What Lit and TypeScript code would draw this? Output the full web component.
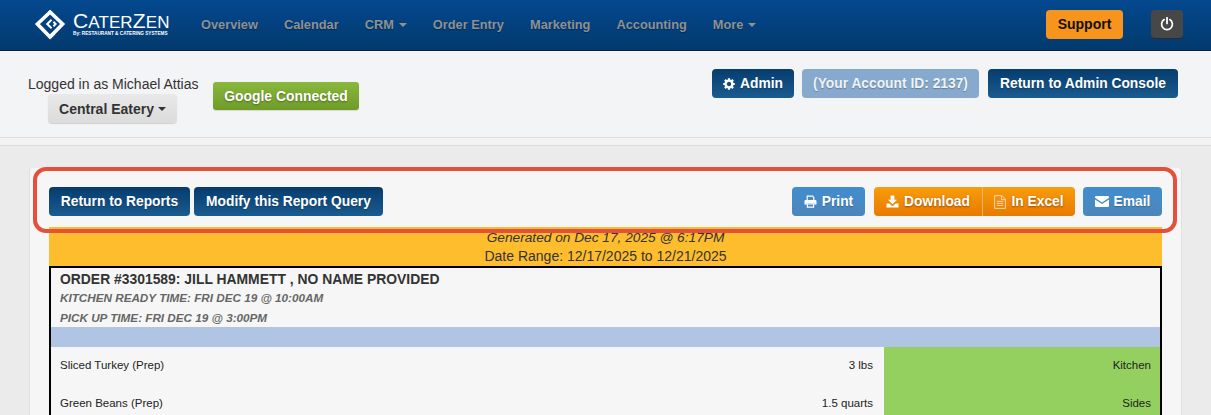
import { LitElement, html, css, svg } from "lit";
import { customElement } from "lit/decorators.js";

const caret = html`<span class="caret"></span>`;

const gear = svg`<svg class="ic" width="12" height="12" viewBox="0 0 12 12"><circle cx="6" cy="6" r="3.4" fill="none" stroke="#fff" stroke-width="2.4"/><g stroke="#fff" stroke-width="2.2"><path d="M6 0.2V2.4M6 9.6V11.8M0.2 6H2.4M9.6 6H11.8M1.9 1.9L3.4 3.4M8.6 8.6L10.1 10.1M10.1 1.9L8.6 3.4M3.4 8.6L1.9 10.1"/></g></svg>`;
const printer = svg`<svg class="ic" width="13" height="13" viewBox="0 0 13 13"><path d="M3.2 5V1.2H8.6L9.8 2.4V5" fill="none" stroke="#fff" stroke-width="1.2"/><path d="M1.6 5H11.4A1.1 1.1 0 0 1 12.5 6.1V9.6H10.2V8H2.8V9.6H.5V6.1A1.1 1.1 0 0 1 1.6 5Z" fill="#fff"/><path d="M3.4 8.8H9.6V12.2H3.4Z" fill="none" stroke="#fff" stroke-width="1.2"/></svg>`;
const download = svg`<svg class="ic" width="13" height="13" viewBox="0 0 13 13"><path d="M4.6 .6H8.4V4.8H11L6.5 9.2L2 4.8H4.6Z" fill="#fff"/><path d="M.5 8.4H3.4L5.2 10.2A1.8 1.8 0 0 0 7.8 10.2L9.6 8.4H12.5V12.4H.5Z" fill="#fff"/></svg>`;
const fileIc = svg`<svg class="ic" width="12" height="14" viewBox="0 0 12 14"><path d="M.6.6H7.8L11.4 4.2V13.4H.6Z M7.4.8V4.6H11.2 M2.8 6.4H9.2M2.8 8.4H9.2M2.8 10.4H9.2" fill="none" stroke="#f6d9ae" stroke-width="1"/></svg>`;
const mail = svg`<svg class="ic" width="14" height="11" viewBox="0 0 14 11"><path d="M1.2 0H12.8A1.2 1.2 0 0 1 14 1.2V1.8L7 6.4L0 1.8V1.2A1.2 1.2 0 0 1 1.2 0Z" fill="#fff"/><path d="M0 3.4L7 8L14 3.4V9.8A1.2 1.2 0 0 1 12.8 11H1.2A1.2 1.2 0 0 1 0 9.8Z" fill="#fff"/></svg>`;
const power = svg`<svg width="14" height="14" viewBox="0 0 14 14"><path d="M4.2 2.6A5.4 5.4 0 1 0 9.8 2.6" fill="none" stroke="#fff" stroke-width="1.7" stroke-linecap="round"/><path d="M7 .8V6.4" stroke="#fff" stroke-width="1.8" stroke-linecap="round"/></svg>`;
const logo = svg`<svg width="32" height="32" viewBox="0 0 32 32"><g fill="none" stroke="#fff" stroke-width="3.6"><path d="M17 3.2L3.4 16L16 29L20 25"/><path d="M15 3L28.6 16L16 29"/></g><path d="M17.6 11.8L13.2 16L17.6 20.2M19.4 13.8L21.6 16L19.4 18.2" fill="none" stroke="#fff" stroke-width="2"/></svg>`;

@customElement("app-root")
export class AppRoot extends LitElement {
  static styles = css`
    :host { display: block; height: 415px; overflow: hidden; background: #ebebeb;
      font-family: "Liberation Sans", Arial, sans-serif; color: #222; }
    * { box-sizing: border-box; }
    .top { height: 51px; background: linear-gradient(#04488f, #023a6d); border-bottom: 1px solid #0d2036;
      display: flex; align-items: center; padding: 0 28px 2px 34px; }
    .brand { display: flex; align-items: center; width: 167px; gap: 7px; }
    .word { color: #fff; line-height: 1; margin-top: 1px; }
    .word b { display: block; font-weight: 400; font-size: 17px; letter-spacing: .1px; line-height: 16px; white-space: nowrap; }
    .word b span { font-size: 21px; }
    .word small { display: block; font-size: 4.7px; font-weight: 700; white-space: nowrap; line-height: 6px; }
    nav { display: flex; gap: 26px; flex: 1; }
    nav a { color: #8f9194; font-size: 12.8px; font-weight: 700; text-shadow: 0 1px 1px rgba(0,0,0,.35); white-space: nowrap; }
    .caret { display: inline-block; width: 0; height: 0; border: 4px solid transparent; border-top-color: currentColor;
      border-bottom: 0; vertical-align: 2px; margin-left: 4px; }
    nav .caret { margin-left: 5px; }
    .support { width: 77px; height: 29px; background: #f7941e; border-radius: 4px; color: #111; font-size: 14px; font-weight: 700;
      display: flex; align-items: center; justify-content: center; margin-right: 28px; }
    .off { width: 32px; height: 29px; border-radius: 4px; background: #474747; border-bottom: 1px solid #2a2a2a;
      display: flex; align-items: center; justify-content: center; }
    .sub { height: 87px; background: #f3f4f5; border-bottom: 1px solid #dcdcdc; display: flex;
      justify-content: space-between; padding: 0 33px 0 28px; }
    .who { display: flex; padding-top: 24px; }
    .login { display: flex; flex-direction: column; align-items: flex-start; width: 171px; }
    .login span { font-size: 14px; line-height: 18px; color: #333; white-space: nowrap; }
    .venue { margin: 1px 0 0 20px; width: 129px; height: 29px; border-radius: 4px; background: linear-gradient(#e9e9e9, #dbdbdb);
      color: #333; font-size: 14px; font-weight: 700; display: flex; align-items: center; justify-content: center;
      box-shadow: 0 1px 1px rgba(0,0,0,.15); }
    .google { margin: 7px 0 0 14px; width: 146px; height: 28px; border-radius: 3px; background: linear-gradient(#8ab73c, #6f9c29);
      color: #fff; font-size: 13.9px; font-weight: 700; display: flex; align-items: center; justify-content: center;
      text-shadow: 0 1px 2px rgba(0,0,0,.35); box-shadow: 0 1px 1px rgba(0,0,0,.12); }
    .acts { display: flex; gap: 8px; padding-top: 18px; }
    .btn { height: 29px; border-radius: 4px; color: #fff; font-size: 13.8px; font-weight: 700; display: flex; align-items: center;
      justify-content: center; gap: 5px; white-space: nowrap; text-shadow: 0 1px 1px rgba(0,0,0,.25); }
    .navy { background: linear-gradient(#063c6d, #1a5b90); }
    .faded { background: #86a9cd; color: #eef3f8; }
    .sky { background: linear-gradient(#428dcf, #4c86ba); }
    .w-admin { width: 82px; }
    .w-account { width: 177px; }
    .w-console { width: 190px; margin-left: 1px; }
    .w-reports { width: 141px; }
    .w-query { width: 189px; }
    .w-print { width: 73px; }
    .w-download { width: 108px; }
    .w-excel { width: 93px; }
    .w-email { width: 79px; }
    .band { height: 8px; background: #f3f3f3; border-bottom: 1px solid #dcdcdc; }
    main { padding: 22px 29px 0; }
    .card { position: relative; background: #f6f6f6; border-radius: 3px 3px 0 0; border-right: 1px solid #e0e0e0; border-left: 1px solid #e0e0e0;
      padding: 19px 19px 0 19px; height: 260px; }
    .tools { display: flex; gap: 4px; height: 29px; }
    .push { flex: 1; }
    .split { display: flex; margin: 0 4px 0 5px; border-radius: 4px; overflow: hidden; }
    .split .btn { border-radius: 0; background: linear-gradient(#f89c0c, #e97a00); text-shadow: 0 1px 2px rgba(90,40,0,.6); }
    .split .btn + .btn { border-left: 1px solid #f3b469; }
    .gen { margin-top: 11px; height: 39px; padding-top: 1px; background: #fdbd2c; text-align: center; font-size: 14px; line-height: 19px; color: #333; }
    .gen i { display: block; font-size: 13.7px; }
    .report { border: 2px solid #000; border-bottom: 0; height: 170px; }
    .ohead { padding: 2px 9px 0; height: 59px; }
    .ohead h3 { margin: 0; font-size: 13.9px; line-height: 18px; color: #333; font-weight: 700; }
    .ohead p { margin: 0; font-size: 11.7px; line-height: 19.5px; color: #666; font-weight: 700; font-style: italic; }
    .bar { height: 20px; background: #b0c4e4; }
    .row { display: grid; grid-template-columns: 1fr 90px 276px; height: 37.5px; font-size: 11.5px; color: #222; line-height: 37.5px; }
    .row div:first-child { padding-left: 9px; }
    .row div:nth-child(2) { text-align: right; margin-right: 11px; }
    .row div:nth-child(3) { text-align: right; background: #94d060; padding-right: 9px; }
    .mark { position: absolute; left: 3px; right: 4px; top: -1px; height: 66px; border: 4px solid #e5503c; border-radius: 13px; pointer-events: none; }
  `;

  render() {
    return html`
      <header class="top">
        <div class="brand">
          ${logo}
          <div class="word"><b><span>C</span>ATER<span>Z</span>EN</b><small>By: RESTAURANT &amp; CATERING SYSTEMS</small></div>
        </div>
        <nav>
          <a>Overview</a><a>Calendar</a><a>CRM${caret}</a><a>Order Entry</a><a>Marketing</a><a>Accounting</a><a>More${caret}</a>
        </nav>
        <div class="support">Support</div>
        <div class="off">${power}</div>
      </header>
      <section class="sub">
        <div class="who">
          <div class="login"><span>Logged in as Michael Attias</span><div class="venue">Central Eatery${caret}</div></div>
          <div class="google">Google Connected</div>
        </div>
        <div class="acts">
          <div class="btn navy w-admin">${gear}Admin</div>
          <div class="btn faded w-account">(Your Account ID: 2137)</div>
          <div class="btn navy w-console">Return to Admin Console</div>
        </div>
      </section>
      <div class="band"></div>
      <main>
        <div class="card">
          <div class="tools">
            <div class="btn navy w-reports">Return to Reports</div>
            <div class="btn navy w-query">Modify this Report Query</div>
            <div class="push"></div>
            <div class="btn sky w-print">${printer}Print</div>
            <div class="split">
              <div class="btn w-download">${download}Download</div>
              <div class="btn w-excel">${fileIc}In Excel</div>
            </div>
            <div class="btn sky w-email">${mail}Email</div>
          </div>
          <div class="gen"><i>Generated on Dec 17, 2025 @ 6:17PM</i>Date Range: 12/17/2025 to 12/21/2025</div>
          <div class="report">
            <div class="ohead">
              <h3>ORDER #3301589: JILL HAMMETT , NO NAME PROVIDED</h3>
              <p>KITCHEN READY TIME: FRI DEC 19 @ 10:00AM</p>
              <p>PICK UP TIME: FRI DEC 19 @ 3:00PM</p>
            </div>
            <div class="bar"></div>
            <div class="row"><div>Sliced Turkey (Prep)</div><div>3 lbs</div><div>Kitchen</div></div>
            <div class="row"><div>Green Beans (Prep)</div><div>1.5 quarts</div><div>Sides</div></div>
          </div>
          <div class="mark"></div>
        </div>
      </main>
    `;
  }
}
